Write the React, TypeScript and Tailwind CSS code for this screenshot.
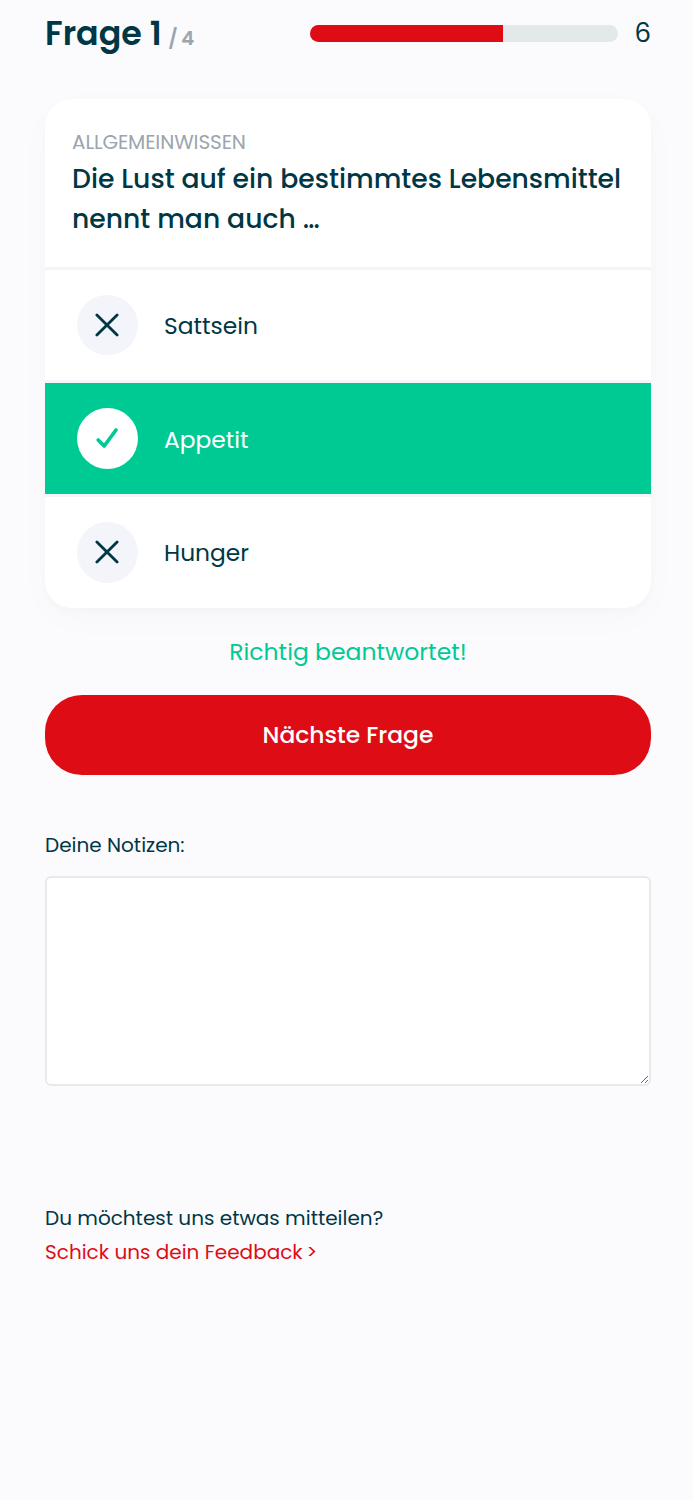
import { useState } from 'react'

const QUESTION = {
  category: 'Allgemeinwissen',
  lines: ['Die Lust auf ein bestimmtes Lebensmittel', 'nennt man auch …'],
  answers: [
    { label: 'Sattsein', correct: false },
    { label: 'Appetit', correct: true },
    { label: 'Hunger', correct: false },
  ],
}

const TIME_TOTAL = 16
const TIME_LEFT = 6

function CrossIcon() {
  return (
    <svg width="24" height="24" viewBox="0 0 24 24" fill="none" stroke="currentColor" strokeWidth="2.8" strokeLinecap="round">
      <line x1="1.9" y1="1.9" x2="22.1" y2="22.1" />
      <line x1="22.1" y1="1.9" x2="1.9" y2="22.1" />
    </svg>
  )
}

function CheckIcon() {
  return (
    <svg width="24" height="24" viewBox="0 0 24 24" fill="none" stroke="currentColor" strokeWidth="3.7" strokeLinecap="round" strokeLinejoin="round">
      <path d="M3.2 13 9.2 19 21 3" />
    </svg>
  )
}

function Answer({ label, correct }: { label: string; correct: boolean }) {
  return (
    <li
      className={`flex h-[113.8px] items-center border-t-[3.5px] border-[#f4f5f9] pl-8 ${
        correct ? 'bg-[#00ca94] bg-clip-padding text-white' : 'text-[#003745]'
      }`}
    >
      <span
        className={`flex h-[60.5px] w-[60.5px] items-center justify-center rounded-full ${
          correct ? 'bg-white text-[#00ca94]' : 'bg-[#f4f5fa]'
        }`}
      >
        {correct ? <CheckIcon /> : <CrossIcon />}
      </span>
      <span className="ml-[26.5px] pt-[0.8px] text-[23.35px] leading-[35px]">{label}</span>
    </li>
  )
}

export default function App() {
  const [notes, setNotes] = useState('')

  return (
    <main className="min-h-screen bg-[#fbfbfe] pr-[42px] pl-[45px] font-['Poppins','Inter',sans-serif] text-[#003745]">
      {/* Progress */}
      <header className="flex h-[99px] items-start justify-between">
        <h1 className="flex items-baseline gap-[6.5px] pt-[9px]">
          <span className="text-[33.3px] leading-[50px] font-semibold">Frage 1</span>
          <span className="text-[19.5px] font-semibold tracking-[-0.6px] text-[#9aa5ae]">/ 4</span>
        </h1>
        <div className="flex h-[66px] items-center">
          <div className="h-[17px] w-[308px] overflow-hidden rounded-full bg-[#e3e8ea]">
            <div className="h-full bg-[#de0c15]" style={{ width: `${((TIME_TOTAL - TIME_LEFT) / TIME_TOTAL) * 100}%` }} />
          </div>
          <span className="w-[33px] text-right text-[26px]">{TIME_LEFT}</span>
        </div>
      </header>

      {/* Question */}
      <section className="h-[509px] overflow-hidden rounded-[27px] bg-white shadow-[0_10px_40px_rgba(0,0,0,0.02),0_4px_10px_rgba(0,0,0,0.02)]">
        <div className="h-[167.5px] pt-[28px] pl-[27px]">
          <p className="text-[20px] leading-[31px] tracking-[-0.1px] text-[#9aa5ae] uppercase">{QUESTION.category}</p>
          <h2 className="pt-px text-[26.65px] leading-[40px] font-medium whitespace-nowrap">
            {QUESTION.lines.map(line => (
              <span key={line} className="block">{line}</span>
            ))}
          </h2>
        </div>
        <ul>
          {QUESTION.answers.map(answer => (
            <Answer key={answer.label} {...answer} />
          ))}
        </ul>
      </section>

      <p className="mt-[26px] text-center text-[23.5px] leading-[35px] text-[#00ca94]">Richtig beantwortet!</p>
      <button
        type="button"
        className="mt-[26px] flex h-[80px] w-full items-center justify-center rounded-[37px] bg-[#de0c15] text-[23.4px] font-medium text-white"
      >
        Nächste Frage
      </button>

      {/* Notes */}
      <label htmlFor="notes" className="mt-[54px] block text-[20px] leading-[33px]">Deine Notizen:</label>
      <textarea
        id="notes"
        value={notes}
        onChange={e => setNotes(e.target.value)}
        className="mt-[14px] block h-[210px] w-full resize rounded-[6px] border-2 border-[#e6eaec] bg-white p-3 text-[20px] outline-none"
      />

      {/* Feedback */}
      <footer className="mt-[116px] text-[20px] leading-[33.3px]">
        <p>Du möchtest uns etwas mitteilen?</p>
        <a href="#feedback" className="block pt-px text-[#de0c15]">
          Schick uns dein Feedback<span className="tracking-[-1.4px]"> &gt;</span>
        </a>
      </footer>
    </main>
  )
}
